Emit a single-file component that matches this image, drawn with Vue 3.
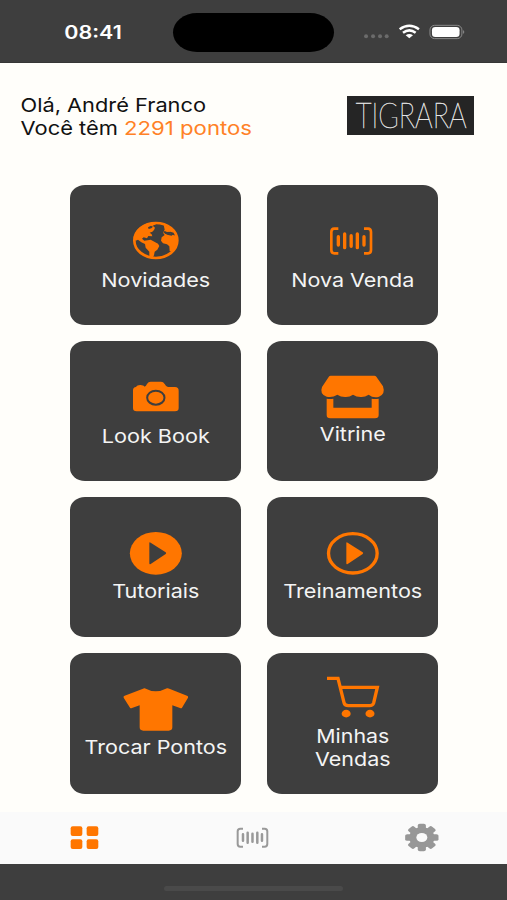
<script setup>
const user = { name: 'André Franco', points: 2291 }

const tiles = [
  { id: 'globe', label: 'Novidades', width: 109, box: '188 128 198 153' },
  { id: 'barcode', label: 'Nova Venda', width: 123, box: '188 128 198 153' },
  { id: 'camera', label: 'Look Book', width: 108, box: '188 118 198 151' },
  { id: 'store', label: 'Vitrine', width: 66, box: '188 122 198 143' },
  { id: 'play', label: 'Tutoriais', width: 87, box: '188 125 198 143' },
  { id: 'playOutline', label: 'Treinamentos', width: 139, box: '188 125 198 143' },
  { id: 'shirt', label: 'Trocar Pontos', width: 142.5, box: '188 128 198 144' },
  { id: 'cart', label: 'Minhas Vendas', lines: [['Minhas', 73], ['Vendas', 75.5]], box: '188 93 198 145' },
]

const linesOf = (tile) => tile.lines ?? [[tile.label, tile.width]]
const iconHeight = (tile) => Number(tile.box.split(' ')[3]) / 3
const teeth = [0, 45, 90, 135, 180, 225, 270, 315]
</script>

<template>
  <div class="screen">
    <header class="status">
      <svg class="clock" width="60" height="24"><text x="0.300" y="18.600" textLength="57.5" lengthAdjust="spacingAndGlyphs">08:41</text></svg>
      <div class="island"></div>
      <svg class="signals" viewBox="1086 60 316 70" width="105.3" height="23.3">
        <g fill="#6b6b6b">
          <circle cx="1098" cy="109" r="6" /><circle cx="1119" cy="109" r="6" />
          <circle cx="1140" cy="109" r="6" /><circle cx="1160" cy="109" r="6" />
        </g>
        <g fill="none" stroke="#fff" stroke-width="7.5">
          <path d="M1199 88Q1228 67 1257 88" />
          <path d="M1209 98.500Q1228 84 1247 98.500" />
        </g>
        <path d="M1217 106Q1228 98 1239 106L1228 115Z" fill="#fff" />
        <rect x="1290" y="76" width="96" height="40" rx="14" fill="none" stroke="#8b8b8b" stroke-width="3" />
        <rect x="1296" y="81" width="83" height="30" rx="10" fill="#fff" />
        <path d="M1390 90Q1396 96 1390 102Z" fill="#999" />
      </svg>
    </header>

    <main class="content">
      <section class="intro">
        <svg class="greeting" width="240" height="48">
          <text x="-0.500" y="18.600" textLength="185.500" lengthAdjust="spacingAndGlyphs">Olá, {{ user.name }}</text>
          <text x="-0.500" y="41.800" textLength="97.500" lengthAdjust="spacingAndGlyphs">Você têm</text>
          <text class="points" x="103" y="41.800" textLength="128" lengthAdjust="spacingAndGlyphs">{{ user.points }} pontos</text>
        </svg>
        <div class="brand">
          <svg width="127" height="39">
            <text x="8.700" y="32.300" textLength="111" lengthAdjust="spacingAndGlyphs">TIGRARA</text>
          </svg>
        </div>
      </section>

      <section class="grid">
        <button v-for="tile in tiles" :key="tile.id" class="tile" type="button">
          <svg class="icon" :viewBox="tile.box" width="66" :height="iconHeight(tile)">
            <template v-if="tile.id === 'globe'">
              <ellipse cx="286.500" cy="195.500" rx="64.500" ry="52.500" class="line" stroke-width="8" />
              <path d="M220 186Q226 158 258 145L284 141L287 147L277 151L284 157L281 164L276 169L268 172L274 177L276 183L264 182L260 189L250 186L245 190L252 196L262 195L271 193L282 199L293 205L297 212L291 223L283 229L281 240L276 249L267 246L267 229L256 217L254 206L243 201L233 193L226 196Z" />
              <path d="M263 156L272 151L278 154L273 159L265 161Z" class="cut" />
              <path d="M310 148L334 160L340 172L330 169L322 171L313 167L309 171L316 176L327 173L338 179L353 182Q355 207 336 227L328 228L327 213L320 207L308 204L302 196L304 186L313 179L308 172L313 163Z" />
              <path d="M312 172L324 169L329 174L339 176L334 181L320 178Z" class="cut" />
            </template>
            <template v-else-if="tile.id === 'barcode'">
              <g class="line" stroke-width="8">
                <path d="M243 160H231Q222 160 222 170V224Q222 234 231 234H243M320 160H332Q341 160 341 170V224Q341 234 332 234H320" />
                <path stroke-width="10" stroke-linecap="round" d="M243 184V209M262 176V217M281.500 181V213M300 176V217M320 184V209" />
              </g>
            </template>
            <template v-else-if="tile.id === 'camera'">
              <path d="M227 157L230 153Q240 149 250 153L253 156Q257 155 260 148Q264 141 271 141H302Q309 141 313 148Q317 156 323 157H344Q355 157 355 168V220Q355 230 344 230H229Q218 230 218 220V167Q218 158 227 157Z" />
              <ellipse cx="286.500" cy="189" rx="26" ry="21" fill="none" stroke="#3e3e3e" stroke-width="6" />
            </template>
            <template v-else-if="tile.id === 'store'">
              <path d="M220 121H351Q355 121 357 124L377 153Q385 177 365 184Q348 189 334 178Q322 186 310 185Q297 185 287 178Q276 186 263 185Q250 185 240 178Q225 188 208 184Q186 177 194 155L214 125Q216 121 220 121Z" />
              <path d="M208 190Q218 192 228 190V217H343V190Q353 192 364 190V239Q364 249 353 249H219Q208 249 208 239Z" />
            </template>
            <template v-else-if="tile.id === 'play'">
              <ellipse cx="286.500" cy="189" rx="78" ry="64" />
              <path d="M267 158Q267 154 271 157L316 186Q319 188 316 191L271 221Q267 223 267 219Z" class="cut" />
            </template>
            <template v-else-if="tile.id === 'playOutline'">
              <ellipse cx="286.500" cy="189" rx="73" ry="59" class="line" stroke-width="10" />
              <path d="M267 158Q267 154 271 157L316 186Q319 188 316 191L271 221Q267 223 267 219Z" />
            </template>
            <path v-else-if="tile.id === 'shirt'" d="M253 129Q286 147 320 129Q323 128 327 130L380 151Q385 153 383 157L365 187Q363 190 359 188L336 180V246Q336 256 325 256H249Q238 256 238 246V180L215 188Q211 190 209 187L190 157Q188 153 193 151L248 130Q251 128 253 129Z" />
            <template v-else>
              <path class="line" stroke-width="10" d="M209 100H242L260 173Q262 182 273 182H337Q346 182 349 174L360 127H249" />
              <ellipse cx="266.500" cy="206" rx="13.500" ry="11.500" /><ellipse cx="338" cy="206" rx="13.500" ry="11.500" />
            </template>
          </svg>
          <svg v-for="[text, width] in linesOf(tile)" :key="text" class="label" width="150" height="23">
            <text :x="74.8 - width / 2" y="18.350" :textLength="width" lengthAdjust="spacingAndGlyphs">{{ text }}</text>
          </svg>
        </button>
      </section>
    </main>

    <nav class="tabs">
      <svg viewBox="205 66 100 90" width="33.300" height="30" fill="#ff7600">
        <rect x="213" y="79" width="35" height="29" rx="6" /><rect x="261" y="79" width="35" height="29" rx="6" />
        <rect x="213" y="118" width="35" height="29" rx="6" /><rect x="261" y="118" width="35" height="29" rx="6" />
      </svg>
      <svg viewBox="711 66 100 90" width="33.300" height="30" fill="none" stroke="#999" stroke-width="6">
        <path d="M729 86H721Q713 86 713 94V132Q713 140 721 140H729M786 86H794Q802 86 802 94V132Q802 140 794 140H786" />
        <path stroke-linecap="round" stroke-width="7.500" d="M729 103V122M743 98V128M757.500 101V125M772 98V128M786 103V122" />
      </svg>
      <svg viewBox="1216 66 102 90" width="34" height="30">
        <g transform="translate(1266.500 112.500) scale(1.220 1)" fill="#979797">
          <circle r="31" />
          <rect v-for="angle in teeth" :key="angle" x="-10" y="-41" width="20" height="24" rx="5" :transform="`rotate(${angle})`" />
          <circle r="13.500" fill="#fafafa" />
        </g>
      </svg>
    </nav>
    <footer class="home"><div class="handle"></div></footer>
  </div>
</template>

<style>
body { margin: 0; }
</style>

<style scoped>
.screen {
  width: 507px;
  height: 900px;
  display: flex;
  flex-direction: column;
  overflow: hidden;
  background: #fffefa;
  font-family: Inter, "Liberation Sans", sans-serif;
}
svg { display: block; flex: none; overflow: visible; }
.status {
  box-sizing: border-box;
  height: 63px;
  flex: none;
  display: grid;
  grid-template-columns: 109.300px 161px 105.300px;
  align-items: start;
  padding: 12.500px 0 0 64px;
  background: #3e3e3e;
  border-bottom: 1px solid #363636;
}
.clock { margin-top: 7.500px; }
.clock text { font-size: 18px; font-weight: 600; fill: #fff; }
.island { height: 39px; border-radius: 24px / 19.500px; background: #000; }
.signals { margin: 7.500px 0 0 27.700px; }
.content { height: 749px; flex: none; }
.intro {
  display: flex;
  justify-content: space-between;
  align-items: flex-start;
  padding: 30px 33px 0 21px;
  height: 91.500px;
}
.greeting text { font-size: 19px; fill: #111; }
.greeting .points { fill: #ff8126; }
.brand { margin-top: 3.300px; background: #252525; }
.brand text { font-family: Lato, sans-serif; font-size: 35px; font-weight: 100; fill: #e4e4e4; stroke: #e4e4e4; stroke-width: 0.5px; }
.grid {
  display: grid;
  grid-template-columns: 171.300px 171.300px;
  grid-auto-rows: 140.300px;
  gap: 16px 25.700px;
  padding-left: 70px;
}
.tile {
  display: flex;
  flex-direction: column;
  align-items: center;
  justify-content: center;
  padding: 0;
  border: 0;
  border-radius: 15px / 13px;
  background: #3e3e3e;
}
.icon { fill: #ff7600; }
.icon .line { fill: none; stroke: #ff7600; }
.icon .cut { fill: #3e3e3e; }
.label text { font-family: Inter, "Liberation Sans", sans-serif; font-size: 19px; fill: #f4f4f4; }
.tabs {
  box-sizing: border-box;
  height: 52px;
  flex: none;
  display: flex;
  justify-content: space-between;
  padding: 10px 67.700px 0 68.300px;
  background: #fafafa;
}
.home {
  flex: 1;
  display: flex;
  justify-content: center;
  align-items: flex-start;
  background: #3e3e3e;
}
.handle { width: 179px; height: 5px; margin-top: 22px; border-radius: 3px; background: #4a4a4a; }
</style>
